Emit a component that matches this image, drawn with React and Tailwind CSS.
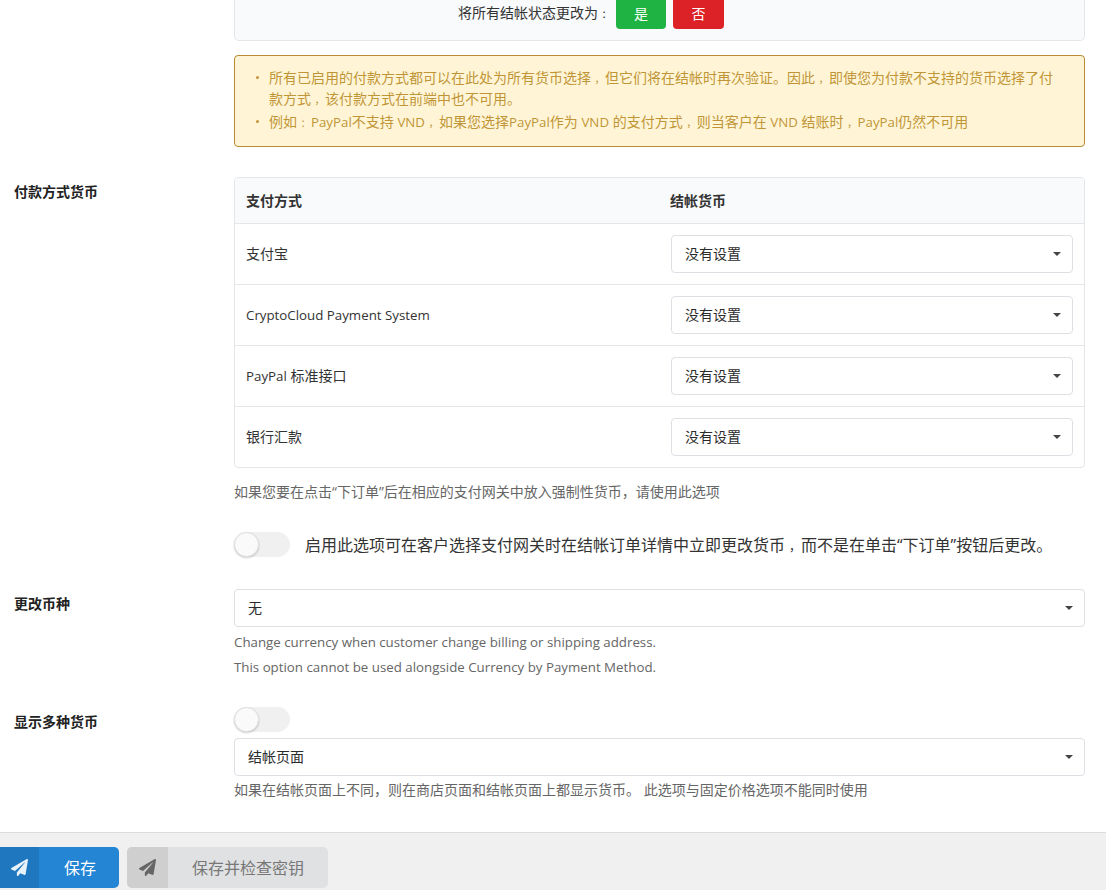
const font = "font-['Open_Sans','Noto_Sans_CJK_SC',sans-serif]";

function T({ children }) {
  const parts = children.split(/([A-Za-z][A-Za-z ]*[A-Za-z]|[，：])/);
  return parts.map((p, i) => {
    if (p === "，" || p === "：") return <span key={i} className="pl-[0.333em] text-[0.75em] leading-none">{p}</span>;
    if (/^[A-Za-z]/.test(p)) return <span key={i} className="text-[13.3px] leading-none">{p}</span>;
    return p;
  });
}

function Caret() {
  return (
    <svg width="8" height="4" viewBox="0 0 8 4" className="-mt-[1px]">
      <path d="M0 0H8L4 4Z" fill="#444" />
    </svg>
  );
}

function SelectBox({ label, className = "" }) {
  return (
    <div className={`flex items-center justify-between bg-white border border-[#dcdfe4] rounded-[4px] h-[38px] pl-[13px] pr-[11px] text-[14px] text-[#2b2b2b] ${className}`}>
      <span className="-mt-[2px]">{label}</span>
      <Caret />
    </div>
  );
}

function Toggle() {
  return (
    <div className="relative w-[56px] h-[25px] rounded-full bg-[#f0f0f0] shrink-0">
      <div className="absolute left-0 top-0 w-[25px] h-[25px] rounded-full bg-[#fafafa] border border-[#e0e0e0] shadow-[0_1px_2px_rgba(0,0,0,0.2)]" />
    </div>
  );
}

function Plane({ color }) {
  return (
    <svg width="17" height="17" viewBox="0 0 512 512">
      <path fill={color} d="M476 3.2 12.5 270.6c-18.1 10.4-15.8 35.6 2.2 43.2L121 358.4l287.3-253.2c5.5-4.9 13.3 2.6 8.6 8.3L176 407v80.5c0 23.6 28.5 32.9 42.5 15.8L282 426l124.6 52.2c14.2 6 30.4-2.9 33-18.2l72-432C515 7.8 493.3-6.8 476 3.2z" />
    </svg>
  );
}

function Row({ name }) {
  return (
    <div className="flex items-center h-[61px] border-t border-[#e4e6ea] pl-[11px] pr-[11px]">
      <div className="w-[425px] -mt-[2px] text-[14px] text-[#333]"><T>{name}</T></div>
      <SelectBox label="没有设置" className="flex-1" />
    </div>
  );
}

function Field({ label, className = "", children }) {
  return (
    <div className={`flex ${className}`}>
      <div className="w-[234px] pl-[14px] pt-[4px] text-[14px] font-bold text-[#222] shrink-0">{label}</div>
      <div className="w-[851px]">{children}</div>
    </div>
  );
}

export default function App() {
  return (
    <div className={`${font} w-[1106px] h-[890px] overflow-hidden bg-white flex flex-col`}>
      <div className="flex-1 min-h-0">
        <div className="ml-[234px] w-[851px] h-[41px] bg-[#f9fafc] border border-t-0 border-[#e4e6ea] rounded-b-[5px] flex items-start pl-[223px]">
          <span className="text-[14px] text-[#333] leading-[25px] w-[158px]"><T>将所有结帐状态更改为：</T></span>
          <div className="w-[50px] h-[29px] pb-[3px] bg-[#1fb344] rounded-b-[4px] text-white text-[14px] flex items-center justify-center">是</div>
          <div className="w-[51px] h-[29px] pb-[3px] ml-[7px] bg-[#dd2227] rounded-b-[4px] text-white text-[14px] flex items-center justify-center">否</div>
        </div>

        <div className="ml-[234px] w-[851px] mt-[14px] h-[92px] bg-[#fff5d6] border border-[#b58b33] rounded-[4px] pl-[20px] pr-[20px] pt-[11px] text-[14px] text-[#bf9537] leading-[21px]">
          <ul className="list-none">
            <li className="relative pl-[14px]">
              <span className="absolute left-[1px] top-[9px] w-[3px] h-[3px] rounded-full bg-[#bf9537]" />
              <T>所有已启用的付款方式都可以在此处为所有货币选择，但它们将在结帐时再次验证。因此，即使您为付款不支持的货币选择了付款方式，该付款方式在前端中也不可用。</T>
            </li>
            <li className="relative pl-[14px] mt-[2px]">
              <span className="absolute left-[1px] top-[9px] w-[3px] h-[3px] rounded-full bg-[#bf9537]" />
              <T>例如：PayPal不支持 VND，如果您选择PayPal作为 VND 的支付方式，则当客户在 VND 结账时，PayPal仍然不可用</T>
            </li>
          </ul>
        </div>

        <Field label="付款方式货币" className="mt-[30px]">
          <div className="border border-[#e4e6ea] rounded-[4px] overflow-hidden h-[291px]">
            <div className="flex items-center h-[45px] pb-[1px] bg-[#f9fafc] pl-[11px] text-[14px] font-bold text-[#333]">
              <div className="w-[424px]">支付方式</div>
              <div>结帐货币</div>
            </div>
            <Row name="支付宝" />
            <Row name="CryptoCloud Payment System" />
            <Row name="PayPal 标准接口" />
            <Row name="银行汇款" />
          </div>
          <p className="mt-[14px] text-[14px] leading-[20px] text-[#666]">如果您要在点击“下订单”后在相应的支付网关中放入强制性货币，请使用此选项</p>
          <div className="mt-[30px] flex items-center gap-[15px] h-[25px]">
            <Toggle />
            <span className="text-[16px] text-[#333] whitespace-nowrap"><T>启用此选项可在客户选择支付网关时在结帐订单详情中立即更改货币，而不是在单击“下订单”按钮后更改。</T></span>
          </div>
        </Field>

        <Field label="更改币种" className="mt-[32px]">
          <SelectBox label="无" />
          <p className="mt-[5px] text-[13.3px] leading-[20px] text-[#666]">Change currency when customer change billing or shipping address.</p>
          <p className="mt-[5px] text-[13.3px] leading-[20px] text-[#666]">This option cannot be used alongside Currency by Payment Method.</p>
        </Field>

        <Field label="显示多种货币" className="mt-[30px]">
          <Toggle />
          <SelectBox label="结帐页面" className="mt-[6px]" />
          <p className="mt-[4px] text-[14px] leading-[20px] text-[#666]">如果在结帐页面上不同，则在商店页面和结帐页面上都显示货币。 此选项与固定价格选项不能同时使用</p>
        </Field>
      </div>

      <div className="h-[58px] shrink-0 bg-[#f0f0f0] border-t border-[#dcdcdc] pt-[14px] flex gap-[8px]">
        <div className="w-[119px] h-[41px] bg-[#2385d3] rounded-r-[5px] flex overflow-hidden text-white text-[16px]">
          <div className="w-[39px] bg-[#1f78bf] flex items-center justify-center"><Plane color="#e8f2fa" /></div>
          <div className="flex-1 pl-[2px] flex items-center justify-center">保存</div>
        </div>
        <div className="w-[201px] h-[41px] bg-[#e0e1e3] rounded-[5px] flex overflow-hidden text-[#777] text-[16px]">
          <div className="w-[41px] bg-[#cfcfcf] flex items-center justify-center"><Plane color="#666" /></div>
          <div className="flex-1 flex items-center justify-center">保存并检查密钥</div>
        </div>
      </div>
    </div>
  );
}
